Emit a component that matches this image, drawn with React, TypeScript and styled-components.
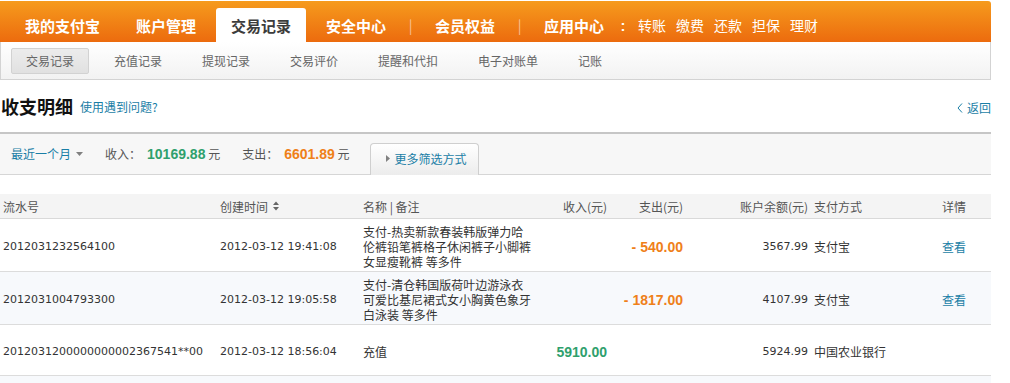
import React from 'react'
import styled, { createGlobalStyle } from 'styled-components'

const CJK = `"Noto Sans CJK SC", sans-serif`
const NUM = `"DejaVu Sans", "Noto Sans CJK SC", sans-serif`
const AMOUNT = `"Liberation Sans", Arial, sans-serif`

const BLUE = '#1a7ea6'
const GREEN = '#2fa06d'
const ORANGE = '#ef8019'

const COLS = '217px 143px 176px 74px 76px 125px 128px 52px'

interface Trade {
  id: string
  time: string
  name: string
  income?: string
  outcome?: string
  balance: string
  method: string
  detail?: boolean
}

const trades: Trade[] = [
  {
    id: '2012031232564100',
    time: '2012-03-12 19:41:08',
    name: '支付-热卖新款春装韩版弹力哈伦裤铅笔裤格子休闲裤子小脚裤女显瘦靴裤 等多件',
    outcome: '540.00',
    balance: '3567.99',
    method: '支付宝',
    detail: true,
  },
  {
    id: '2012031004793300',
    time: '2012-03-12 19:05:58',
    name: '支付-清仓韩国版荷叶边游泳衣可爱比基尼裙式女小胸黄色象牙白泳装 等多件',
    outcome: '1817.00',
    balance: '4107.99',
    method: '支付宝',
    detail: true,
  },
  {
    id: '2012031200000000002367541**00',
    time: '2012-03-12 18:56:04',
    name: '充值',
    income: '5910.00',
    balance: '5924.99',
    method: '中国农业银行',
  },
]

const subTabs = ['交易记录', '充值记录', '提现记录', '交易评价', '提醒和代扣', '电子对账单', '记账']
const quickLinks = ['转账', '缴费', '还款', '担保', '理财']

const App = () => {
  return (
    <Page>
      <GlobalStyle />

      <MainNav>
        <NavTab>我的支付宝</NavTab>
        <NavTab>账户管理</NavTab>
        <NavTab $active>交易记录</NavTab>
        <NavTab>安全中心</NavTab>
        <NavDivider>|</NavDivider>
        <NavTab>会员权益</NavTab>
        <NavDivider>|</NavDivider>
        <NavTab>应用中心</NavTab>
        <NavDots>:</NavDots>
        <QuickLinks>
          {quickLinks.map((l) => (
            <QuickLink key={l}>{l}</QuickLink>
          ))}
        </QuickLinks>
      </MainNav>

      <SubNav>
        {subTabs.map((t, i) => (
          <SubTab key={t} $active={i === 0}>
            {t}
          </SubTab>
        ))}
      </SubNav>

      <TitleBar>
        <PageTitle>收支明细</PageTitle>
        <HelpLink>使用遇到问题?</HelpLink>
        <BackLink>
          <svg width="6" height="10" viewBox="0 0 6 10">
            <polyline points="5,0.5 1,5 5,9.5" fill="none" stroke={BLUE} strokeWidth="1" />
          </svg>
          返回
        </BackLink>
      </TitleBar>

      <FilterBar>
        <RangeSelect>
          最近一个月
          <svg width="7" height="4" viewBox="0 0 7 4">
            <polygon points="0,0 7,0 3.5,4" fill="#808080" />
          </svg>
        </RangeSelect>
        <Summary>
          收入：<Amount $color={GREEN}>10169.88</Amount> 元
        </Summary>
        <Summary>
          支出：<Amount $color={ORANGE}>6601.89</Amount> 元
        </Summary>
        <MoreFilters>
          <svg width="4" height="7" viewBox="0 0 4 7">
            <polygon points="0,0 4,3.5 0,7" fill="#808080" />
          </svg>
          更多筛选方式
        </MoreFilters>
      </FilterBar>

      <Table>
        <HeadRow>
          <Cell>流水号</Cell>
          <Cell>
            创建时间
            <SortIcon width="6" height="10" viewBox="0 0 6 10">
              <polygon points="0,4 3,0.5 6,4" fill="#666" />
              <polygon points="0,6 3,9.5 6,6" fill="#666" />
            </SortIcon>
          </Cell>
          <Cell>名称 | 备注</Cell>
          <Cell $align="right">收入(元)</Cell>
          <Cell $align="right">支出(元)</Cell>
          <Cell $align="right">账户余额(元)</Cell>
          <Cell>支付方式</Cell>
          <Cell>详情</Cell>
        </HeadRow>

        {trades.map((t, i) => (
          <Row key={t.id} $striped={i % 2 === 1}>
            <Cell $num>{t.id}</Cell>
            <Cell $num>{t.time}</Cell>
            <NameCell>{t.name}</NameCell>
            <Cell $align="right">
              {t.income && <Amount $color={GREEN}>{t.income}</Amount>}
            </Cell>
            <Cell $align="right">
              {t.outcome && <Amount $color={ORANGE}>- {t.outcome}</Amount>}
            </Cell>
            <Cell $align="right" $num>
              {t.balance}
            </Cell>
            <Cell>{t.method}</Cell>
            <Cell>{t.detail && <DetailLink>查看</DetailLink>}</Cell>
          </Row>
        ))}
        <Row $striped />
      </Table>
    </Page>
  )
}

const GlobalStyle = createGlobalStyle`
  html, body {
    margin: 0;
    background: #fff;
  }
  body {
    font-family: ${CJK};
    font-size: 12px;
    color: #333;
  }
`

const Page = styled.div`
  width: 991px;
  padding-top: 1px;
`

const MainNav = styled.nav`
  display: flex;
  align-items: flex-end;
  height: 41px;
  padding-left: 7px;
  background: linear-gradient(#f69b1d, #ec6b0e);
  border-radius: 0 3px 0 0;
`

const NavTab = styled.a<{ $active?: boolean }>`
  display: flex;
  align-items: center;
  height: 34px;
  padding: 0 ${(p) => (p.$active ? 15 : 18)}px;
  margin: 0 ${(p) => (p.$active ? 2 : 0)}px;
  font: bold 15px/1 ${CJK};
  color: ${(p) => (p.$active ? '#3c3c3c' : '#fff')};
  background: ${(p) => (p.$active ? '#fff' : 'transparent')};
  border-radius: 3px 3px 0 0;
  white-space: nowrap;
  cursor: pointer;
`

const NavDivider = styled.span`
  display: flex;
  align-items: center;
  justify-content: center;
  width: 13px;
  height: 34px;
  font: 14px/1 ${CJK};
  color: rgba(255, 255, 255, 0.55);
`

const NavDots = styled.span`
  display: flex;
  align-items: center;
  justify-content: center;
  width: 6px;
  height: 34px;
  margin-left: -2px;
  font: bold 15px/1 "Liberation Sans", sans-serif;
  color: #fff;
`

const QuickLinks = styled.div`
  display: flex;
  align-items: center;
  gap: 10px;
  height: 34px;
  margin-left: 12px;
`

const QuickLink = styled.a`
  font: 14px/1 ${CJK};
  color: #fff;
  cursor: pointer;
`

const SubNav = styled.div`
  display: flex;
  align-items: center;
  gap: 10px;
  height: 37px;
  padding-left: 10px;
  background: linear-gradient(#fff, #f2f2f2);
  border: 1px solid #d3d3d3;
  border-top: none;
`

const SubTab = styled.a<{ $active?: boolean }>`
  display: flex;
  align-items: center;
  height: 24px;
  padding: 0 14px;
  font: 12px/1 ${CJK};
  color: #666;
  border: 1px solid ${(p) => (p.$active ? '#d2d2d2' : 'transparent')};
  border-radius: 2px;
  background: ${(p) => (p.$active ? 'linear-gradient(#ececec, #e1e1e1)' : 'transparent')};
  cursor: pointer;
`

const TitleBar = styled.div`
  display: flex;
  align-items: center;
  height: 52px;
  padding-left: 1px;
`

const PageTitle = styled.h2`
  margin: 0;
  font: bold 18px/1 ${CJK};
  color: #111;
`

const HelpLink = styled.a`
  margin-left: 7px;
  margin-top: 1px;
  font: 12px/1 ${CJK};
  color: ${BLUE};
  cursor: pointer;
`

const BackLink = styled.a`
  display: flex;
  align-items: center;
  gap: 4px;
  margin-left: auto;
  margin-top: 3px;
  font: 12px/1 ${CJK};
  color: ${BLUE};
  cursor: pointer;
`

const FilterBar = styled.div`
  display: flex;
  align-items: center;
  gap: 22px;
  height: 40px;
  padding-left: 11px;
  background: #f7f7f7;
  border-top: 2px solid #c6c6c6;
  border-bottom: 1px solid #d6d6d6;
`

const RangeSelect = styled.a`
  display: flex;
  align-items: center;
  gap: 5px;
  font: 12px/1 ${CJK};
  color: ${BLUE};
  cursor: pointer;
`

const Summary = styled.span`
  display: flex;
  align-items: center;
  font: 12px/1 ${CJK};
  color: #555;
  white-space: pre;
`

const Amount = styled.span<{ $color: string }>`
  margin-left: 6px;
  font: bold 14px/1 ${AMOUNT};
  color: ${(p) => p.$color};
  white-space: pre;
`

const MoreFilters = styled.a`
  align-self: flex-end;
  display: flex;
  align-items: center;
  gap: 4px;
  box-sizing: border-box;
  height: 32px;
  width: 109px;
  margin-left: -1px;
  margin-bottom: -1px;
  padding: 0 0 2px 15px;
  font: 12px/1 ${CJK};
  color: ${BLUE};
  background: linear-gradient(#fff, #ececec);
  border: 1px solid #cfcfcf;
  border-bottom: none;
  border-radius: 4px 4px 0 0;
  cursor: pointer;
`

const Table = styled.div`
  margin-top: 19px;
`

const HeadRow = styled.div`
  display: grid;
  grid-template-columns: ${COLS};
  align-items: center;
  box-sizing: border-box;
  height: 25px;
  background: #f4f4f4;
  border-bottom: 1px solid #d9d9d9;
  color: #555;
`

const Row = styled.div<{ $striped?: boolean }>`
  display: grid;
  grid-template-columns: ${COLS};
  align-items: center;
  box-sizing: border-box;
  min-height: 51px;
  padding: 5px 0 2px;
  background: ${(p) => (p.$striped ? '#f7f9fc' : '#fff')};
  border-bottom: 1px solid #dcdcdc;
`

const Cell = styled.div<{ $align?: 'left' | 'right'; $num?: boolean }>`
  display: flex;
  align-items: center;
  justify-content: ${(p) => (p.$align === 'right' ? 'flex-end' : 'flex-start')};
  padding: 0 3px;
  font-family: ${(p) => (p.$num ? NUM : CJK)};
  font-size: ${(p) => (p.$num ? 11 : 12)}px;
  line-height: 15px;
  color: inherit;
  white-space: nowrap;
`

const NameCell = styled.div`
  padding: 0 3px;
  font: 12px/15px ${CJK};
  word-break: break-all;
`

const SortIcon = styled.svg`
  margin-left: 5px;
`

const DetailLink = styled.a`
  color: ${BLUE};
  cursor: pointer;
`

export default App
